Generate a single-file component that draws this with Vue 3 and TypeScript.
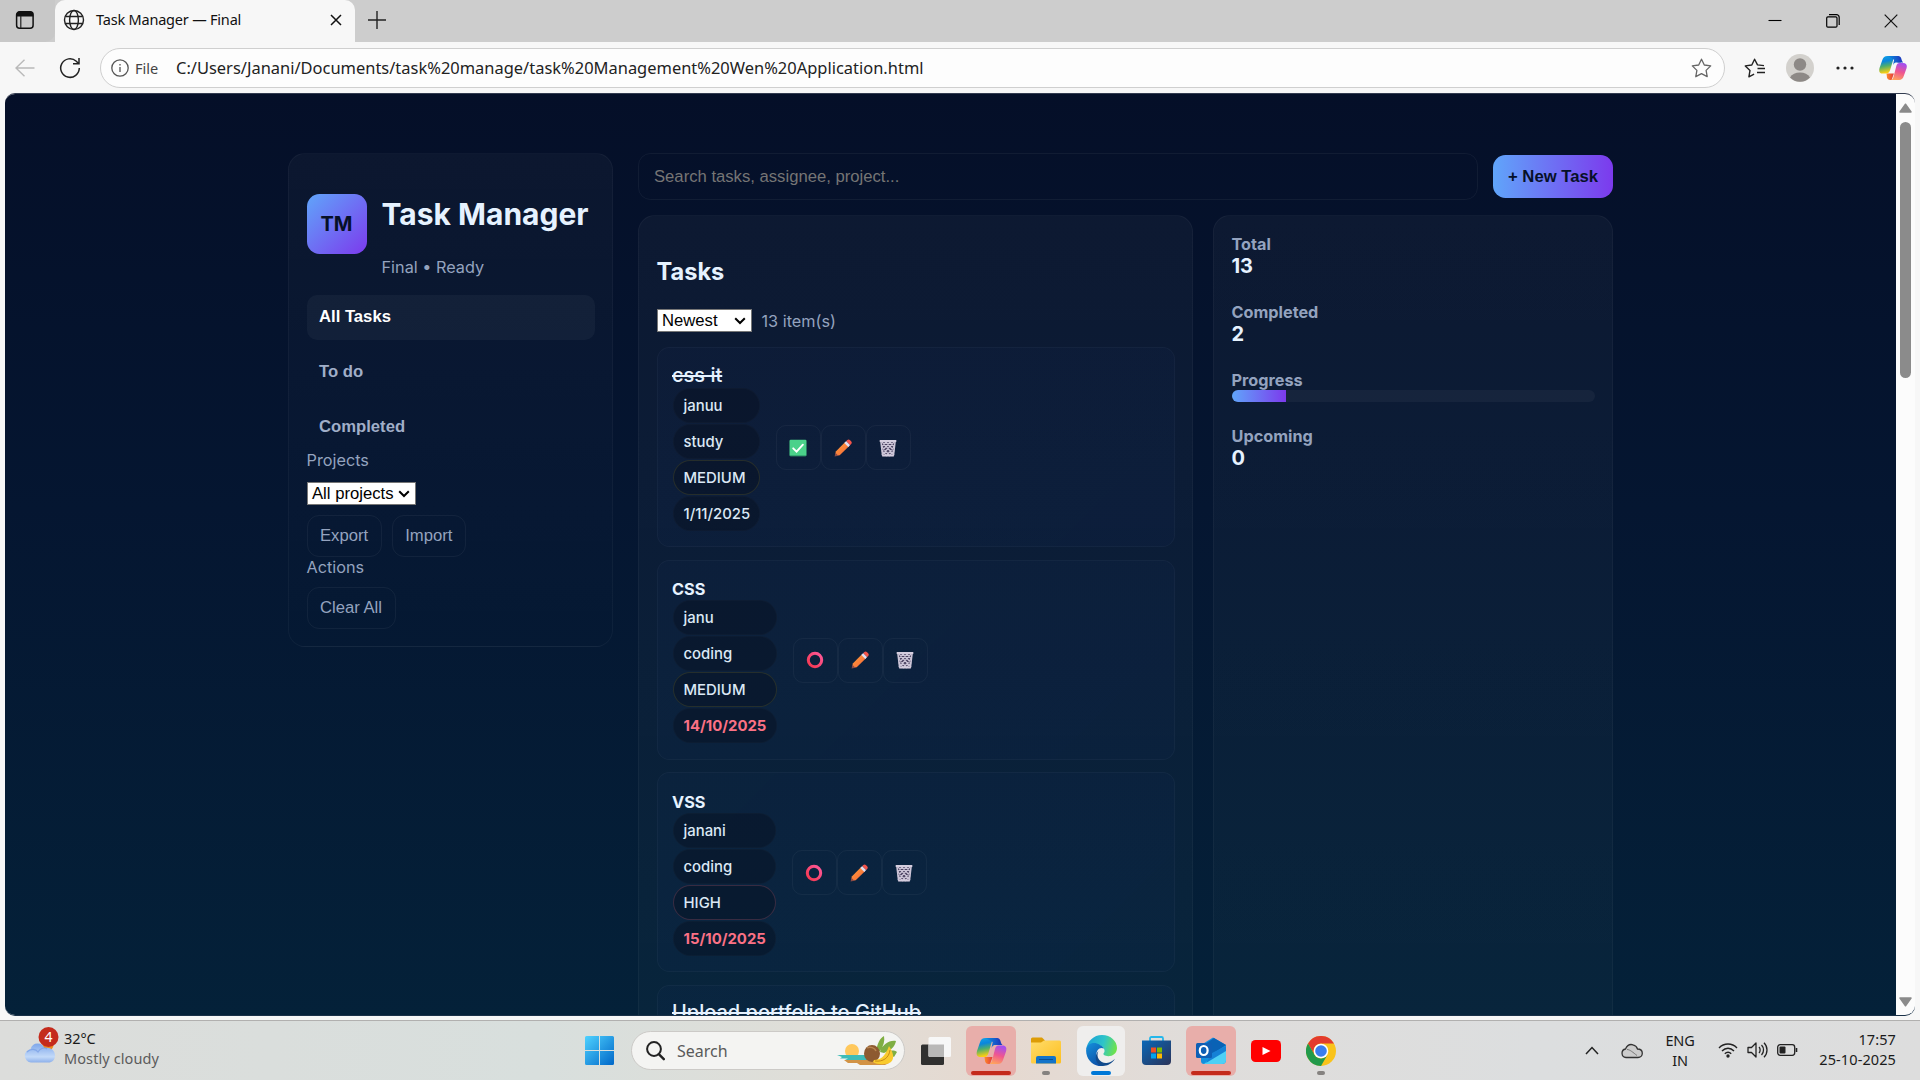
<script setup lang="ts">
interface Task {
  title: string
  tags?: string[]
  priority?: 'LOW' | 'MEDIUM' | 'HIGH'
  due?: string
  done?: boolean
  overdue?: boolean
}

const tasks: Task[] = [
  { title: 'css it', tags: ['januu', 'study'], priority: 'MEDIUM', due: '1/11/2025', done: true },
  { title: 'CSS', tags: ['janu', 'coding'], priority: 'MEDIUM', due: '14/10/2025', overdue: true },
  { title: 'VSS', tags: ['janani', 'coding'], priority: 'HIGH', due: '15/10/2025', overdue: true },
  { title: 'Upload portfolio to GitHub', done: true },
]
const nav = ['All Tasks', 'To do', 'Completed']
const progress = 15
</script>

<template>
  <div class="desktop">
    <svg class="defs" width="0" height="0" aria-hidden="true">
      <defs>
        <linearGradient id="cpA" x1="0" y1="0" x2="0.2" y2="1">
          <stop offset="0" stop-color="#14a5e8" /><stop offset=".35" stop-color="#0a86dd" />
          <stop offset=".62" stop-color="#4fae6c" /><stop offset="1" stop-color="#ffcf0f" />
        </linearGradient>
        <linearGradient id="cpB" x1="0.6" y1="0" x2="0.3" y2="1">
          <stop offset="0" stop-color="#a34ef0" /><stop offset=".5" stop-color="#f0568f" /><stop offset="1" stop-color="#ffa65c" />
        </linearGradient>
        <linearGradient id="cpC" x1="0" y1="0" x2="1" y2="0">
          <stop offset="0" stop-color="#0a93e0" /><stop offset="1" stop-color="#1b3fc0" />
        </linearGradient>
        <linearGradient id="cpD" x1="0" y1="0" x2="1" y2="0">
          <stop offset="0" stop-color="#ff8a2a" /><stop offset="1" stop-color="#e2393d" />
        </linearGradient>
        <linearGradient id="win" x1="0" y1="0" x2="1" y2="1">
          <stop offset="0" stop-color="#4fd2ff" /><stop offset="1" stop-color="#0067c8" />
        </linearGradient>
        <linearGradient id="cloud" x1="0" y1="0" x2="0" y2="1">
          <stop offset="0" stop-color="#7da6ea" /><stop offset=".7" stop-color="#c3daf9" /><stop offset="1" stop-color="#8db0ea" />
        </linearGradient>
        <linearGradient id="fold" x1="0" y1="0" x2="1" y2="1">
          <stop offset="0" stop-color="#ffdc6b" /><stop offset="1" stop-color="#fdbf1f" />
        </linearGradient>
        <linearGradient id="edA" x1="0" y1="0.3" x2="1" y2="0.5">
          <stop offset="0" stop-color="#1aa0d8" /><stop offset=".55" stop-color="#2ec4c9" /><stop offset="1" stop-color="#6fe34b" />
        </linearGradient>
        <linearGradient id="edB" x1="0" y1="0" x2="0.6" y2="1">
          <stop offset="0" stop-color="#1590dc" /><stop offset="1" stop-color="#0c4fa6" />
        </linearGradient>
        <linearGradient id="store" x1="0" y1="0" x2="1" y2="1">
          <stop offset="0" stop-color="#0a68b8" /><stop offset="1" stop-color="#2b3358" />
        </linearGradient>
        <linearGradient id="ring" x1="0" y1="1" x2="1" y2="0">
          <stop offset="0" stop-color="#f4364c" /><stop offset="1" stop-color="#ff5a9c" />
        </linearGradient>
        <linearGradient id="pen" x1="0" y1="0" x2="1" y2="1">
          <stop offset="0" stop-color="#ffa238" /><stop offset="1" stop-color="#f5613c" />
        </linearGradient>
        <symbol id="copilot" viewBox="0 0 30 28">
          <path d="M18 1h-3l5 7h6c-1-1-1.500-2-2-4-.6-2-1.600-3-3.500-3z" fill="#1b3fc0" />
          <path d="M8 20h8l-2.500 7h-1.500c-2 0-3-1-3.500-3z" fill="url(#cpD)" />
          <path d="M9 1h10c-2 0-3 1.500-3.600 3.500L12 16c-.7 2.600-2 4-4.500 4H4c-3.500 0-4.500-2.500-3.500-6L3.600 5C4.400 2.500 6 1 9 1z" fill="url(#cpA)" />
          <path d="M9 1h10c1.800 0 2.600 1 3.200 3L23.500 8H19c-1.500 0-3 .3-4 3l1.200-6z" fill="url(#cpC)" />
          <path d="M22 8.500h4c3.500 0 4.500 2.500 3.500 6l-3 8.500c-.9 2.700-2.500 4-5 4H12c2 0 3-1.300 3.600-3.500L18.500 12c.6-2.300 1.700-3.500 3.500-3.500z" fill="url(#cpB)" />
        </symbol>
      </defs>
    </svg>

    <header class="tabs">
      <div class="workspaces">
        <svg width="20" height="20" viewBox="0 0 20 20"><rect x="1.600" y="1.800" width="16.500" height="16.500" rx="3" fill="none" stroke="#111" stroke-width="1.500" /><path d="M1.500 6.500V4.500a3 3 0 0 1 3-3h10.700a3 3 0 0 1 3 3v2z" fill="#111" /><path d="M5.800 6v12" stroke="#222" stroke-width="1.200" /></svg>
      </div>
      <div class="tab">
        <svg width="22" height="22" viewBox="0 0 22 22" fill="none" stroke="#222" stroke-width="1.400"><circle cx="11" cy="11" r="9.500" /><ellipse cx="11" cy="11" rx="4.400" ry="9.500" /><path d="M2.300 7.500h17.400M2.300 14.500h17.400" /></svg>
        <span class="tab-title">Task Manager — Final</span>
        <svg class="tab-x" width="12" height="12" viewBox="0 0 12 12"><path d="M1 1l10 10M11 1L1 11" stroke="#111" stroke-width="1.500" /></svg>
      </div>
      <svg class="plus" width="18" height="18" viewBox="0 0 18 18"><path d="M9 0v18M0 9h18" stroke="#222" stroke-width="1.400" /></svg>
      <div class="win-controls">
        <svg width="14" height="14" viewBox="0 0 14 14"><path d="M.5 6.500h13" stroke="#000" stroke-width="1.100" /></svg>
        <svg width="14" height="14" viewBox="0 0 14 14" fill="none" stroke="#000" stroke-width="1.200"><rect x=".7" y="2.900" width="10.300" height="10.300" rx="1.200" /><path d="M3 .7h7.500a2.700 2.700 0 0 1 2.700 2.700V11" /></svg>
        <svg width="14" height="14" viewBox="0 0 14 14"><path d="M.7 .7l12.600 12.600M13.300 .7L.7 13.300" stroke="#111" stroke-width="1.200" /></svg>
      </div>
    </header>

    <div class="toolbar">
      <svg class="back" width="20" height="18" viewBox="0 0 20 18"><path d="M19.500 9H1M9.500 .8L1 9l8.500 8.200" fill="none" stroke="#b9b9b9" stroke-width="1.400" /></svg>
      <svg class="reload" width="22" height="22" viewBox="0 0 22 22"><path d="M20.300 11A9.300 9.300 0 1 1 17.300 4.200L19.500 6.500M20 1v5.800h-6" fill="none" stroke="#222" stroke-width="1.500" /></svg>
      <div class="address">
        <svg width="18" height="18" viewBox="0 0 18 18" fill="none" stroke="#555" stroke-width="1.300"><circle cx="9" cy="9" r="8.200" /><path d="M9 8v5M9 5v1.500" /></svg>
        <span class="scheme">File</span>
        <span class="url">C:/Users/Janani/Documents/task%20manage/task%20Management%20Wen%20Application.html</span>
        <svg class="star" width="21" height="20" viewBox="0 0 21 20"><path d="M10.500 1.200l2.800 5.800 6.400.9-4.600 4.500 1.100 6.300-5.700-3-5.700 3 1.100-6.300L1.300 7.900l6.400-.9z" fill="none" stroke="#666" stroke-width="1.300" stroke-linejoin="round" /></svg>
      </div>
      <svg class="fav" width="22" height="20" viewBox="0 0 22 20" fill="none" stroke="#222" stroke-width="1.400" stroke-linejoin="round"><path d="M20 7.600l-6.500-.7-2.900-5.700-2.800 5.800-6.500.9 4.700 4.500-1.100 6.400 5.200-2.700" /><path d="M13.500 10.500H21M13 14.500h8" /></svg>
      <svg class="avatar" width="28" height="28" viewBox="0 0 28 28"><circle cx="14" cy="14" r="14" fill="#d3d1cd" /><circle cx="14" cy="10.500" r="6.200" fill="#8d8986" /><path d="M4 23.500c2-3.500 5.500-5 10-5s8 1.500 10 5a14 14 0 0 1-20 0z" fill="#8d8986" /></svg>
      <svg class="dots" width="18" height="4" viewBox="0 0 18 4" fill="#222"><circle cx="2" cy="2" r="1.600" /><circle cx="9" cy="2" r="1.600" /><circle cx="16" cy="2" r="1.600" /></svg>
      <svg class="cop" width="28" height="26"><use href="#copilot" /></svg>
    </div>

    <div class="viewport">
      <main class="page">
        <aside class="panel sidebar">
          <div class="brand">
            <div class="logo">TM</div>
            <div>
              <h1>Task Manager</h1>
              <div class="muted sub">Final • Ready</div>
            </div>
          </div>
          <nav>
            <button v-for="(n, i) in nav" :key="n" :class="{ active: i === 0 }">{{ n }}</button>
          </nav>
          <div class="muted label">Projects</div>
          <div class="select all">All projects<svg width="12" height="8" viewBox="0 0 12 8"><path d="M1.200 1.200L6 6l4.800-4.800" fill="none" stroke="#000" stroke-width="2" /></svg></div>
          <div class="row">
            <button class="ghost">Export</button>
            <button class="ghost">Import</button>
          </div>
          <div class="muted label actions-label">Actions</div>
          <button class="ghost clear">Clear All</button>
        </aside>

        <section class="main">
          <div class="top">
            <div class="search">Search tasks, assignee, project...</div>
            <button class="new">+ New Task</button>
          </div>
          <div class="columns">
            <div class="panel list">
              <h2>Tasks</h2>
              <div class="sort">
                <div class="select newest">Newest<svg width="12" height="8" viewBox="0 0 12 8"><path d="M1.200 1.200L6 6l4.800-4.800" fill="none" stroke="#000" stroke-width="2" /></svg></div>
                <span class="muted">13 item(s)</span>
              </div>
              <article v-for="t in tasks" :key="t.title" class="card">
                <div class="info">
                  <div class="title" :class="{ done: t.done }">{{ t.title }}</div>
                  <div v-for="tag in t.tags" :key="tag" class="pill">{{ tag }}</div>
                  <div v-if="t.priority" class="pill" :class="t.priority.toLowerCase()">{{ t.priority }}</div>
                  <div v-if="t.due" class="pill" :class="{ overdue: t.overdue }">{{ t.due }}</div>
                </div>
                <div v-if="t.due" class="tools">
                  <span class="tool">
                    <svg v-if="t.done" width="18" height="18" viewBox="0 0 18 18"><rect x=".5" y=".8" width="17" height="16.400" rx="1.200" fill="#4bd18a" /><path d="M1 16.500h16" stroke="#36a873" /><path d="M4.200 9.300l3.400 3.400 6.300-7" fill="none" stroke="#fff" stroke-width="1.900" stroke-linecap="round" /></svg>
                    <svg v-else width="18" height="18" viewBox="0 0 18 18"><circle cx="9" cy="9" r="6.700" fill="none" stroke="url(#ring)" stroke-width="3" /></svg>
                  </span>
                  <span class="tool">
                    <svg width="18" height="18" viewBox="0 0 18 18"><path d="M1 17l.8-4.600L11 3.200l4 4L5.700 16.200z" fill="url(#pen)" /><path d="M.6 17.400l.8-3.600 2.900 2.900z" fill="#8b4a45" /><path d="M10.300 4l1.900-1.900 4 4L14.300 8z" fill="#e3def0" /><path d="M12.300 2l1-1c.8-.8 1.900-.7 2.800.2l1 1c.9.900.9 2 .1 2.700l-1 1z" fill="#f5544a" /></svg>
                  </span>
                  <span class="tool">
                    <svg width="18" height="18" viewBox="0 0 18 18"><path d="M1.800 2.500h14.400l-1.400 14.700H3.200z" fill="#4a4160" /><path d="M3 3l12 13M7 3l8 9M11 3l4.500 5M3 8l8 9M3 12l4 4M15 3L3 16M11 3L3 12M7 3L2.500 8M15 8l-8 9M15 12l-4 4" fill="none" stroke="#cbc4d6" stroke-width="1.200" /><path d="M2 3l1.600 13.500M16 3l-1.600 13.500" stroke="#cbc4d6" stroke-width="1.600" /><path d="M.7 1h16.600v2H.7zM3.200 15.500h11.600v2H3.200z" fill="#d5cedf" /></svg>
                  </span>
                </div>
              </article>
            </div>

            <div class="panel stats">
              <div class="stat"><div class="k">Total</div><div class="v">13</div></div>
              <div class="stat"><div class="k">Completed</div><div class="v">2</div></div>
              <div class="stat prog"><div class="k">Progress</div><div class="bar"><div class="fill" :style="{ width: progress + '%' }"></div></div></div>
              <div class="stat"><div class="k">Upcoming</div><div class="v">0</div></div>
            </div>
          </div>
        </section>
      </main>
      <div class="scroll">
        <svg width="13" height="10" viewBox="0 0 13 10"><path d="M6.500 1.200L12 9H1z" fill="#8b8b8b" stroke="#8b8b8b" stroke-width="1.500" stroke-linejoin="round" /></svg>
        <div class="thumb"></div>
        <svg class="down" width="13" height="10" viewBox="0 0 13 10"><path d="M6.500 8.800L12 1H1z" fill="#8b8b8b" stroke="#8b8b8b" stroke-width="1.500" stroke-linejoin="round" /></svg>
      </div>
    </div>

    <footer class="taskbar">
      <div class="weather">
        <svg width="36" height="40" viewBox="0 0 36 40"><circle cx="24" cy="19" r="5.500" fill="#f08a1d" /><path d="M7 36.500a6.700 6.700 0 0 1-.5-13.300C7.500 19.500 10 17.500 13.500 17.500s6 2 7 4.600C26 21 31 24 31 29.500c0 4.500-3 7-6.500 7z" fill="url(#cloud)" /><path d="M3 26c4-4 9-3 11 0 2-4 7-5 9-3" fill="none" stroke="#6f97e2" stroke-width="1.200" opacity=".6" /><circle cx="24.500" cy="11" r="10" fill="#c42b1c" /><text x="24.500" y="16" text-anchor="middle" font-family="Noto Sans" font-size="14" fill="#fff">4</text></svg>
        <div class="wtext"><div>32°C</div><div class="dim">Mostly cloudy</div></div>
      </div>

      <div class="apps">
        <div class="app start">
          <svg width="29" height="29" viewBox="0 0 29 29" fill="url(#win)"><path d="M1.500 0H14v14H0V1.500Q0 0 1.500 0zM15 0h12.500Q29 0 29 1.500V14H15zM0 15h14v14H1.500Q0 29 0 27.500zM15 15h14v12.500q0 1.500-1.500 1.500H15z" /></svg>
        </div>
        <div class="find">
          <svg width="19" height="20" viewBox="0 0 19 20"><circle cx="8" cy="8" r="6.900" fill="none" stroke="#222" stroke-width="2" /><path d="M12.800 13.200l5 5" stroke="#222" stroke-width="2.400" stroke-linecap="round" /></svg>
          <span>Search</span>
          <svg class="fruit" width="62" height="32" viewBox="0 0 62 32">
            <circle cx="16" cy="16" r="7" fill="#ffc85c" /><path d="M1 20h30v5H9l3-1.500H4L6 22z" fill="#3ebcb8" /><path d="M8 25h25l20 3-4 2H24l-3-2H12z" fill="#d29345" />
            <path d="M40 17C41 9 44 3 48 1c1 5-.5 10-4 15zM44 17c3-8 9-12 16-11-1 5-4 9-12 12zM50 18c4-3 8-3 11-1l-3 5z" fill="#7fae43" />
            <ellipse cx="36" cy="18.500" rx="8" ry="8.500" fill="#8d5a30" /><path d="M31 13c3-2 8 0 9 3" stroke="#b98550" stroke-width="1.500" fill="none" />
            <path d="M53 11c4 6 6 12 2 16-4 3-14 3-18 0l1-2c6 0 11-3 15-14z" fill="#f9cb2e" /><path d="M39 26c8 1 14-3 15-11" fill="none" stroke="#c98b14" stroke-width="1" />
          </svg>
        </div>
        <div class="app">
          <svg width="30" height="28" viewBox="0 0 30 28"><rect x="0" y="7.500" width="23" height="20.500" rx="1.500" fill="#30302f" /><rect x="7.500" y="0" width="22.500" height="20" rx="1.500" fill="#f7f7f7" /><path d="M7.500 7.500H23V20H9q-1.500 0-1.500-1.500z" fill="#b9b8b7" /></svg>
        </div>
        <div class="app alert"><svg width="31" height="28"><use href="#copilot" /></svg><i class="ind red"></i></div>
        <div class="app">
          <svg width="30" height="27" viewBox="0 0 30 27"><path d="M0 2Q0 .5 1.500.5H11l3 3-3 4H0z" fill="#dd9c06" /><path d="M0 5.500h10L13 3.500h15.500Q30 3.500 30 5v20q0 1.500-1.500 1.500h-27Q0 26.500 0 25z" fill="url(#fold)" /><path d="M5 26.500V21q0-2 2-2h16q2 0 2 2v5.500z" fill="#1374c9" /><path d="M8 22.500h14" stroke="#0a4f93" /></svg>
          <i class="ind dot"></i>
        </div>
        <div class="app current">
          <svg width="31" height="31" viewBox="0 0 30 30"><path d="M.2 14C1 6 7.500 0 15.500 0 24 0 30 6 30 12.500c0 5-4 8-8.500 8-3.500 0-5-1.200-4.600-2.500 1.500-2 1.300-3.500.3-5C14 8 4 8.500 .2 14z" fill="url(#edA)" /><path d="M.1 15C.3 9 6 6.800 10.500 8.200 14.500 9.500 17 12 17.200 13 13 11 10 15 10 19c0 6 4 9.500 8.500 11-9 2-18.500-5-18.400-15z" fill="url(#edB)" /><path d="M12 15.500C9 22 14 27.500 20 27c3.500-.3 6-2 8-4C25.500 27.500 21 30 16 30 9 29 7.500 20 12 15.500z" fill="#114a8b" /></svg>
          <i class="ind blue"></i>
        </div>
        <div class="app">
          <svg width="29" height="29" viewBox="0 0 29 29"><path d="M8 5V2.500Q8 1 9.500 1h10Q21 1 21 2.500V5" fill="none" stroke="#25b7ea" stroke-width="1.800" /><path d="M0 4.500h29V25q0 4-4 4H4q-4 0-4-4z" fill="url(#store)" /><path d="M9 11.500h5v5H9z" fill="#f25022" /><path d="M15 11.500h5v5h-5z" fill="#7fba00" /><path d="M9 17.500h5v5H9z" fill="#00a4ef" /><path d="M15 17.500h5v5h-5z" fill="#ffb900" /></svg>
        </div>
        <div class="app alert">
          <svg width="30" height="27" viewBox="0 0 30 27"><path d="M5 8L17 .5 30 8v15q0 4-4 4H8q-3 0-3-3z" fill="#1490df" /><path d="M9 7L18 1l12 7-14 9z" fill="#0a62b5" /><path d="M30 9v14q0 4-4 4H8z" fill="#4fd0f5" /><path d="M30 9v5L10 26l6-10z" fill="#1581d6" /><rect x="0" y="6" width="16" height="15" rx="1.500" fill="#0f5fb5" /><ellipse cx="7.700" cy="13.500" rx="3.900" ry="4.500" fill="none" stroke="#fff" stroke-width="2.200" /></svg>
          <i class="ind red"></i>
        </div>
        <div class="app"><svg width="30" height="22" viewBox="0 0 30 22"><rect width="30" height="22" rx="4.500" fill="#f00" /><path d="M11.500 7l8 4-8 4z" fill="#fff" /></svg></div>
        <div class="app">
          <svg width="30" height="30" viewBox="0 0 30 30"><circle cx="15" cy="15" r="15" fill="#f9c31b" /><path d="M2 7.500A15 15 0 0 1 28 7.500H15a7.500 7.500 0 0 0-6.500 11.200z" fill="#e33b2e" /><path d="M2 7.500l6.500 11.200A7.500 7.500 0 0 0 21.500 18.700L15 30A15 15 0 0 1 2 7.500z" fill="#229a4b" /><circle cx="15" cy="15" r="7.300" fill="#fff" /><circle cx="15" cy="15" r="5.800" fill="#3b7ded" /></svg>
          <i class="ind dot"></i>
        </div>
      </div>

      <div class="tray">
        <svg class="chev" width="14" height="9" viewBox="0 0 14 9"><path d="M1 8l6-6.500L13 8" fill="none" stroke="#222" stroke-width="1.500" /></svg>
        <svg class="od" width="22" height="16" viewBox="0 0 22 16"><path d="M5 14.500a4.300 4.300 0 0 1-.5-8.500C6 2.500 9 1 12 1.800c2.500.6 4 2.200 4.500 4.200 3 0 4.800 1.800 4.800 4.300 0 2.400-1.900 4.200-4.300 4.200z" fill="#ccc" stroke="#333" stroke-width="1.300" /><path d="M6 6.500c3 0 6 3 10 6" stroke="#777" fill="none" /></svg>
        <div class="lang"><div>ENG</div><div>IN</div></div>
        <svg class="wifi" width="20" height="16" viewBox="0 0 20 16" fill="none" stroke="#222" stroke-width="1.400"><path d="M1 6c5-5.300 13-5.300 18 0M4 9c3.500-3.700 8.500-3.700 12 0M6.800 11.800c2-2 4.500-2 6.400 0" /><circle cx="10" cy="14" r="1" fill="#222" /></svg>
        <svg class="vol" width="21" height="18" viewBox="0 0 21 18" fill="none" stroke="#222" stroke-width="1.300"><path d="M1 6.500h3.500L9 2v14l-4.500-4.500H1z" stroke-linejoin="round" /><path d="M12 6c1.500 1.500 1.500 4.500 0 6M14.500 4c2.700 2.700 2.700 7.300 0 10M17 1.800c4 4 4 10.400 0 14.400" /></svg>
        <svg class="bat" width="21" height="12" viewBox="0 0 21 12"><rect x=".7" y=".7" width="17" height="10.600" rx="2.500" fill="none" stroke="#222" stroke-width="1.300" /><rect x="2.500" y="2.500" width="6" height="7" rx="1" fill="#222" /><path d="M19.500 4v4" stroke="#222" stroke-width="1.600" /></svg>
        <div class="clock"><div>17:57</div><div>25-10-2025</div></div>
      </div>
    </footer>
  </div>
</template>

<style>
html, body { margin: 0; overflow: hidden; }
</style>

<style scoped>
* { box-sizing: border-box; }
svg { display: block; flex: none; }
button { font-family: "Liberation Sans", Arial, sans-serif; font-size: 16.67px; margin: 0; padding: 0; border: 0; background: none; }
.defs { position: absolute; }
.desktop { width: 1920px; height: 1080px; display: flex; flex-direction: column; overflow: hidden; background: #f7f7f7; font-family: "Noto Sans", "Open Sans", sans-serif; color: #1a1a1a; }

.tabs { height: 42px; flex: none; display: flex; align-items: center; background: #cdcdcd; }
.workspaces { width: 55px; height: 42px; padding: 10px 0 0 15px; background: #c8c8c8; border-radius: 0 0 10px 0; }
.tab { width: 300px; height: 42px; flex: none; display: flex; align-items: center; padding: 0 13px 2px 8px; background: #f7f7f7; border-radius: 10px 10px 0 0; }
.tab-title { margin: -2px 0 0 11px; font-size: 14.5px; letter-spacing: -.2px; color: #111; white-space: nowrap; }
.tab-x { margin-left: auto; }
.plus { margin: -3px 0 0 13px; }
.win-controls { margin-left: auto; display: flex; gap: 44px; padding-right: 22px; }

.toolbar { height: 51px; flex: none; display: flex; align-items: center; padding: 1px 13px 0 15px; }
.reload { margin-left: 24px; }
.address { width: 1625px; height: 40px; margin: 0 0 0 19px; flex: none; display: flex; align-items: center; padding: 0 12px 0 10px; background: #fdfdfd; border: 1px solid #cfcfcf; border-radius: 20px; }
.scheme { margin-left: 6px; width: 41px; font-size: 14.5px; color: #444; }
.url { margin-top: -2px; font-size: 16.47px; color: #222; white-space: nowrap; }
.star { margin-left: auto; }
.fav { margin-left: 19px; }
.avatar { margin-left: 20px; }
.dots { margin-left: 22px; }
.cop { margin-left: auto; }

.viewport { height: 923px; flex: none; margin: 0 5px; display: flex; border-radius: 10px; overflow: hidden; border-top: 1px solid #333c50; border-bottom: 1px solid #1a3148; background: #fcfcfc; }
.page { width: 1891px; height: 921px; overflow: hidden; display: flex; align-items: flex-start; gap: 25px; padding: 59px 283px 0; background: linear-gradient(180deg, #050f28 0%, #051631 45%, #042139 100%); font-family: Inter, sans-serif; font-size: 16.25px; color: #e6f2ff; }
.scroll { flex: 1; display: flex; flex-direction: column; align-items: center; padding: 9px 0 8px; }
.thumb { width: 11px; height: 256px; margin-top: 9px; border-radius: 6px; background: #8b8b8b; }
.down { margin-top: auto; }

.panel { border: 1px solid rgba(255, 255, 255, .04); border-radius: 17px; }
.muted { color: #94a3bf; }
.sidebar { width: 325px; height: 494px; flex: none; padding: 40px 17.5px 0; background: linear-gradient(180deg, rgba(255, 255, 255, .032), rgba(255, 255, 255, .004)); }
.brand { display: flex; gap: 15px; height: 101px; }
.logo { width: 60px; height: 60px; border-radius: 12.5px; display: flex; align-items: center; justify-content: center; font-weight: 700; font-size: 20px; color: #061028; background: linear-gradient(135deg, #60a5fa, #7c3aed); }
h1 { margin: 0; font-size: 30px; line-height: 40px; font-weight: 700; white-space: nowrap; }
.sub { margin-top: 23px; line-height: 20px; }
nav { display: flex; flex-direction: column; gap: 10px; }
nav button { height: 45px; padding: 0 0 2px 12.5px; text-align: left; font-weight: 700; color: #a0aec8; border-radius: 10px; }
nav button.active { color: #fff; background: rgba(255, 255, 255, .04); }
.label { height: 32px; line-height: 20px; }
.select { height: 23px; display: flex; align-items: center; justify-content: space-between; padding: 0 5px 0 4.5px; background: #fff; border: 1px solid #767676; font-family: "Liberation Sans", Arial, sans-serif; font-size: 16.67px; line-height: 20px; color: #000; }
.all { width: 109px; }
.newest { width: 95px; }
.row { display: flex; gap: 10px; margin-top: 10px; }
.ghost { height: 42px; padding: 0 12.5px 1px; border: 1px solid rgba(255, 255, 255, .05); border-radius: 12px; color: #94a3bf; }
.actions-label { height: 30px; }

.main { width: 975px; flex: none; }
.top { display: flex; align-items: center; gap: 15px; }
.search { width: 840px; height: 47px; padding: 0 15px; line-height: 45px; border: 1px solid rgba(255, 255, 255, .05); border-radius: 12.5px; font-family: "Liberation Sans", Arial, sans-serif; font-size: 16.67px; color: #757575; }
.new { width: 120px; height: 43px; border-radius: 12.5px; font-weight: 700; color: #061028; background: linear-gradient(90deg, #60a5fa, #7c3aed); }
.columns { display: flex; gap: 20px; margin-top: 15px; }
.list, .stats { height: 2600px; background: linear-gradient(180deg, rgba(255, 255, 255, .034), rgba(255, 255, 255, .018) 32%, rgba(255, 255, 255, .01)); }
.list { width: 555px; padding: 38px 17.5px 0; }
h2 { margin: 0; font-size: 23.6px; line-height: 36px; font-weight: 700; }
.sort { display: flex; align-items: center; gap: 10px; margin: 19px 0 15px; height: 23px; }
.card { height: 200px; margin-bottom: 12.5px; display: flex; align-items: center; gap: 14.5px; padding: 0 14px; border: 1px solid rgba(255, 255, 255, .035); border-radius: 12.5px; background: linear-gradient(135deg, rgba(35, 60, 130, .06), rgba(25, 55, 120, .07)); }
.info { align-self: flex-start; margin-top: 15.5px; display: flex; flex-direction: column; gap: 1px; padding-right: 1px; }
.title { height: 23px; line-height: 27px; padding-left: .5px; font-size: 16.25px; font-weight: 700; white-space: nowrap; }
.title.done { font-size: 20px; line-height: 23px; font-weight: 500; text-decoration: line-through; }
.pill { height: 35px; margin-left: 1px; padding: 0 9px 0 10px; line-height: 34px; border-radius: 18px; font-size: 14.9px; font-weight: 500; color: #dbe8f5; background: rgba(6, 16, 30, .45); border: 1px solid rgba(255, 255, 255, .02); white-space: nowrap; }
.pill.medium { border-color: rgba(250, 204, 21, .12); }
.pill.high { border-color: rgba(251, 113, 133, .2); }
.pill.overdue { color: #fb7185; font-weight: 700; padding-right: 9.7px; }
.tools { display: flex; margin-top: 1px; }
.tool { width: 45px; height: 45px; display: flex; align-items: center; justify-content: center; border: 1px solid rgba(255, 255, 255, .045); border-radius: 10px; }

.stats { width: 400px; padding: 18px 17.5px 0; font-weight: 700; }
.stat { height: 68px; }
.k { height: 20px; line-height: 20px; color: #94a3bf; font-weight: 700; }
.v { font-size: 20px; line-height: 24px; }
.prog { height: 56px; }
.bar { height: 12px; border-radius: 6px; overflow: hidden; background: rgba(255, 255, 255, .045); }
.fill { height: 100%; background: linear-gradient(90deg, #60a5fa, #7c3aed); }

.taskbar { height: 60px; margin-top: auto; flex: none; display: flex; align-items: center; border-top: 1px solid #b1b0af; background: linear-gradient(90deg, #dcdddb 0%, #d8dfdd 28%, #dfded8 42%, #e6d9d0 52%, #dfdddb 63%, #dcdedf 80%, #dddddd 100%); }
.weather { width: 574px; display: flex; padding-left: 24px; margin-top: -7px; }
.wtext { margin: 2px 0 0 4px; font-size: 14.5px; line-height: 20px; letter-spacing: -.1px; }
.dim { color: #5b5b5b; letter-spacing: .1px; }
.apps { display: flex; align-items: center; gap: 5px; }
.app { position: relative; width: 50px; height: 50px; flex: none; display: flex; align-items: center; justify-content: center; border-radius: 6px; }
.alert { background: #e8aeaa; }
.current { width: 48px; margin: 0 1px; background: #efeeed; }
.ind { position: absolute; bottom: 1px; left: 50%; height: 4px; border-radius: 2px; transform: translateX(-50%); }
.red { width: 40px; background: #c42b1c; }
.dot { width: 8px; background: #858280; }
.blue { width: 20px; background: #0078d7; }
.find { width: 274px; height: 39px; margin: 0 1px 0 2px; display: flex; align-items: center; padding: 0 6px 0 14px; border: 1px solid #cccac7; border-radius: 20px; background: #f4f4f2; font-size: 16px; color: #5a5a5a; }
.find span { margin-left: 12px; }
.fruit { margin-left: auto; }
.tray { margin-left: auto; display: flex; align-items: center; padding-right: 24px; font-size: 14.5px; line-height: 20px; }
.od { margin-left: 22px; }
.lang { width: 34px; margin: -2px 0 0 20px; text-align: center; letter-spacing: -.2px; }
.wifi { margin: -2px 0 0 21px; }
.vol { margin: -2px 0 0 9px; }
.bat { margin: -2px 0 0 9px; }
.clock { margin: -3px 0 0 18px; width: 80px; text-align: right; white-space: nowrap; letter-spacing: .1px; }
</style>
